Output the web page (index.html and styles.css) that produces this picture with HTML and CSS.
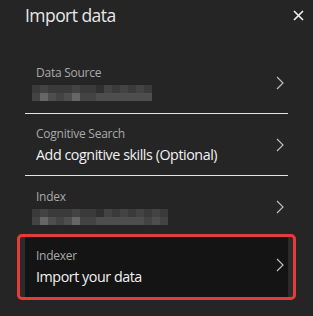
FILE: index.html
```html
<!DOCTYPE html>
<html>
<head>
<meta charset="utf-8">
<link rel="stylesheet" href="styles.css">
</head>
<body>
<div class="panel">
  <div class="header">
    <h1 class="title">Import data</h1>
    <button class="close" aria-label="Close">
      <svg width="11" height="11" viewBox="0 0 11 11"><path d="M1 1 L10 10 M10 1 L1 10" stroke="#f2f2f2" stroke-width="1.6" fill="none"/></svg>
    </button>
  </div>
  <div class="list">
    <div class="row bordered">
      <div class="text">
        <div class="label">Data Source</div>
        <div class="pix w15">
          <span class="s2"></span><span class="s3"></span><span class="s2"></span><span class="s2"></span><span class="s2"></span><span class="s3"></span><span class="s2"></span><span class="s2"></span><span class="s1"></span><span class="s3"></span><span class="s2"></span><span class="s3"></span><span class="s2"></span><span class="s3"></span><span class="s2"></span>
          <span class="s3"></span><span class="s5"></span><span class="s4"></span><span class="s3"></span><span class="s4"></span><span class="s5"></span><span class="s3"></span><span class="s3"></span><span class="s4"></span><span class="s4"></span><span class="s4"></span><span class="s4"></span><span class="s4"></span><span class="s4"></span><span class="s4"></span>
        </div>
      </div>
      <svg class="chev" width="8" height="14" viewBox="0 0 8 14"><path d="M1 1 L7 7 L1 13" stroke="#bdbdbd" stroke-width="1.2" fill="none"/></svg>
    </div>
    <div class="row bordered">
      <div class="text">
        <div class="label">Cognitive Search</div>
        <div class="value">Add cognitive skills (Optional)</div>
      </div>
      <svg class="chev" width="8" height="14" viewBox="0 0 8 14"><path d="M1 1 L7 7 L1 13" stroke="#bdbdbd" stroke-width="1.2" fill="none"/></svg>
    </div>
    <div class="row short">
      <div class="text">
        <div class="label">Index</div>
        <div class="pix w17">
          <span class="s2"></span><span class="s3"></span><span class="s2"></span><span class="s2"></span><span class="s2"></span><span class="s3"></span><span class="s2"></span><span class="s2"></span><span class="s1"></span><span class="s3"></span><span class="s2"></span><span class="s3"></span><span class="s2"></span><span class="s3"></span><span class="s2"></span><span class="s3"></span><span class="s2"></span>
          <span class="s3"></span><span class="s5"></span><span class="s4"></span><span class="s3"></span><span class="s4"></span><span class="s5"></span><span class="s3"></span><span class="s3"></span><span class="s4"></span><span class="s4"></span><span class="s4"></span><span class="s4"></span><span class="s4"></span><span class="s4"></span><span class="s3"></span><span class="s4"></span><span class="s3"></span>
        </div>
      </div>
      <svg class="chev" width="8" height="14" viewBox="0 0 8 14"><path d="M1 1 L7 7 L1 13" stroke="#bdbdbd" stroke-width="1.2" fill="none"/></svg>
    </div>
    <div class="highlight">
      <div class="row selected">
        <div class="text">
          <div class="label">Indexer</div>
          <div class="value">Import your data</div>
        </div>
        <svg class="chev up" width="8" height="14" viewBox="0 0 8 14"><path d="M1 1 L7 7 L1 13" stroke="#bdbdbd" stroke-width="1.2" fill="none"/></svg>
      </div>
    </div>
  </div>
</div>
</body>
</html>
```

FILE: styles.css
```css
* { box-sizing: border-box; }
html, body { margin: 0; padding: 0; }
body {
  background: #252525;
  font-family: "Open Sans", "Noto Sans", sans-serif;
  color: #f0f0f0;
  width: 313px;
  height: 316px;
  overflow: hidden;
}
.panel { display: flex; flex-direction: column; }
.header {
  height: 52px;
  display: flex;
  align-items: flex-start;
  justify-content: space-between;
  padding: 2px 9px 0 25px;
}
.title {
  margin: 0;
  font-size: 17.5px;
  font-weight: 400;
  line-height: 26px;
  letter-spacing: -0.55px;
  color: #e8e8e8;
}
.close {
  background: none;
  border: 0;
  padding: 0;
  margin-top: 8px;
  width: 11px;
  height: 11px;
  display: flex;
}
.list {
  display: flex;
  flex-direction: column;
  margin: 0 25px;
}
.row {
  height: 62px;
  display: flex;
  align-items: center;
  justify-content: space-between;
  padding: 0 4px 0 11px;
}
.row.bordered { border-bottom: 1px solid #e4e4e4; }
.row.short { height: 58px; padding-top: 3px; }
.text { display: flex; flex-direction: column; }
.label {
  font-size: 12px;
  line-height: 16px;
  letter-spacing: -0.25px;
  color: #a9a9a9;
  margin-bottom: 4px;
}
.value {
  font-size: 14.3px;
  line-height: 18px;
  letter-spacing: -0.45px;
  color: #f2f2f2;
}
.pix {
  display: grid;
  grid-auto-rows: 8px;
  grid-template-columns: repeat(15, 8px);
  margin-left: -4px;
}
.pix.w17 { grid-template-columns: repeat(17, 8px); }
.pix span { display: block; }
.s1 { background: #303030; }
.s2 { background: #3a3a3a; }
.s3 { background: #434343; }
.s4 { background: #4e4e4e; }
.s5 { background: #666666; }
.chev { display: block; }
.highlight {
  margin: 0 -8px;
  border: 3px solid #e63b3b;
  border-radius: 5px;
  padding: 0 5px;
  background: #2b2b2b;
}
.row.selected {
  height: 60px;
  background: #141414;
}
.chev.up { margin-top: -4px; }
```
